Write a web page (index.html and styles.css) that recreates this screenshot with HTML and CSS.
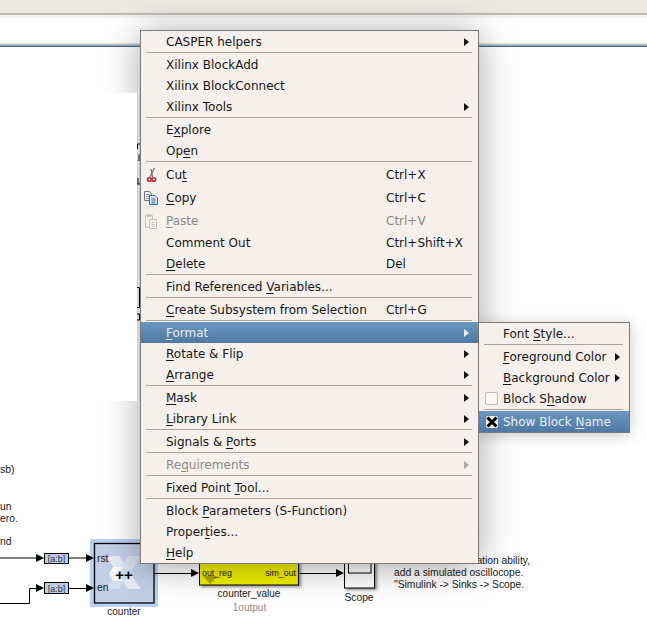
FILE: index.html
```html
<!DOCTYPE html>
<html lang="en">
<head>
<meta charset="utf-8">
<title>Simulink context menu</title>
<link rel="stylesheet" href="styles.css">
</head>
<body>
<div class="page">
  <header class="toolbar"></header>
  <div class="toolbar-rule"></div>
  <div class="strip"></div>
  <div class="status-rule"></div>

  <svg class="diagram" width="647" height="627" viewBox="0 0 647 627">
    <g class="frag">
      <path d="M137.5 149V144H140M138.5 155H140M139 156V161M138 178V184M137 184H140"/>
      <path d="M135 287.5H139.5V307.5H135"/>
      <path d="M137 314H139.5V320H137"/>
    </g>
    <text class="t" x="0" y="473">sb)</text>
    <text class="t" x="0" y="510">un</text>
    <text class="t" x="0" y="522">ero.</text>
    <text class="t" x="0" y="545">nd</text>

    <rect class="halo" x="90" y="539" width="68" height="68"/>
    <rect class="counter" x="94.5" y="543.5" width="59.5" height="59.5"/>
    <polygon class="lx1" points="106,556 119,556 129,572 141,589 128,589 118,574"/>
    <polygon class="lx2" points="141,556 128,556 118,570 106,589 119,589 130,573"/>
    <polygon class="lx3" points="113,567 123,567 119,574 123,581 113,581 109,574"/>
    <text class="plus" x="124" y="580" text-anchor="middle">++</text>
    <text class="t" x="97" y="561.500">rst</text>
    <text class="t" x="97" y="591">en</text>

    <path class="wire" d="M0 558H38M68 558H88M0 603.500H29.500V588.500H38M68 588.500H88M154 573.500H193M300 573.500H338"/>
    <polygon class="head" points="36,554 44,558 36,562"/>
    <polygon class="head" points="86,554 94,558 86,562"/>
    <polygon class="head" points="36,584 44,588 36,592"/>
    <polygon class="head" points="86,584 94,588 86,592"/>
    <polygon class="head" points="191,569 199,573 191,577"/>
    <polygon class="head" points="336,569 344,573 336,577"/>

    <rect class="slice" x="44.500" y="553.500" width="24" height="10"/>
    <text class="t sm" x="56.500" y="562" text-anchor="middle">[a:b]</text>
    <rect class="slice" x="44.500" y="582.500" width="24" height="11"/>
    <text class="t sm" x="56.500" y="591.500" text-anchor="middle">[a:b]</text>

    <rect class="drop" x="201" y="530" width="100" height="57"/>
    <rect class="yellow" x="199.500" y="528" width="99" height="57"/>
    <polygon class="tri" points="203,576 218,576 210,584"/>
    <text class="t port" x="202" y="576">out_reg</text>
    <text class="t port" x="296" y="576" text-anchor="end">sim_out</text>
    <text class="t lab" x="249" y="597" text-anchor="middle">counter_value</text>
    <text class="t lab dim" x="249.500" y="611" text-anchor="middle">1output</text>
    <text class="t lab" x="124" y="615" text-anchor="middle">counter</text>

    <rect class="drop" x="346" y="530" width="31" height="60"/>
    <rect class="scope" x="344.500" y="528" width="30" height="60"/>
    <rect class="scope-in" x="348.500" y="528" width="22.500" height="45"/>
    <text class="t" x="359" y="601" text-anchor="middle">Scope</text>

    <text class="t" x="530" y="564" text-anchor="end">ation ability,</text>
    <text class="t" x="394" y="576">add a simulated oscillocope.</text>
    <text class="t" x="394" y="588">"Simulink -&gt; Sinks -&gt; Scope.</text>
  </svg>

  <div class="menu-shadow"></div>
  <div class="sub-shadow"></div>
  <div class="white-panel"></div>

  <nav class="menu main-menu">
    <div class="item"><span class="slot"></span><span class="label">CASPER helpers</span><i class="arrow"></i></div>
    <div class="sep"></div>
    <div class="item"><span class="slot"></span><span class="label">Xilinx BlockAdd</span></div>
    <div class="item"><span class="slot"></span><span class="label">Xilinx BlockConnect</span></div>
    <div class="item"><span class="slot"></span><span class="label">Xilinx Tools</span><i class="arrow"></i></div>
    <div class="sep"></div>
    <div class="item"><span class="slot"></span><span class="label">E<u>x</u>plore</span></div>
    <div class="item"><span class="slot"></span><span class="label">Op<u>e</u>n</span></div>
    <div class="sep"></div>
    <div class="item tall"><span class="slot">
      <svg width="16" height="16" viewBox="0 0 16 16"><path class="blade" d="M10.500 1L6 10M7 2L8.500 10"/><circle class="ring" cx="5.300" cy="12.500" r="1.800"/><circle class="ring" cx="9.800" cy="12.500" r="1.800"/></svg>
    </span><span class="label">Cu<u>t</u></span><span class="keys">Ctrl+X</span></div>
    <div class="item tall"><span class="slot">
      <svg width="16" height="16" viewBox="0 0 16 16"><path class="pg" d="M0.500 1.500H5.500L7.500 3.500V10.500H0.500Z"/><path class="pl" d="M2 4.500H6M2 6.500H6M2 8.500H5"/><path class="pg2" d="M5.500 5.500H11L13.500 8V14.500H5.500Z"/><path class="pl2" d="M7.500 9H11.500M7.500 11H11.500M7.500 13H11.500"/></svg>
    </span><span class="label"><u>C</u>opy</span><span class="keys">Ctrl+C</span></div>
    <div class="item tall off"><span class="slot">
      <svg width="16" height="16" viewBox="0 0 16 16"><path class="cb" d="M1.500 2.500H8.500V14.500H1.500Z"/><path class="cb" d="M3.500 1.500H6.500V3.500H3.500Z"/><path class="cb2" d="M5.500 6.500H12.500V15.500H5.500Z"/><path class="cb" d="M7.500 9.500H10.500M7.500 11.500H10.500M7.500 13.500H10.500"/></svg>
    </span><span class="label"><u>P</u>aste</span><span class="keys">Ctrl+V</span></div>
    <div class="item"><span class="slot"></span><span class="label">Comment Out</span><span class="keys">Ctrl+Shift+X</span></div>
    <div class="item"><span class="slot"></span><span class="label"><u>D</u>elete</span><span class="keys">Del</span></div>
    <div class="sep"></div>
    <div class="item"><span class="slot"></span><span class="label">Find Referenced <u>V</u>ariables...</span></div>
    <div class="sep"></div>
    <div class="item"><span class="slot"></span><span class="label"><u>C</u>reate Subsystem from Selection</span><span class="keys">Ctrl+G</span></div>
    <div class="sep"></div>
    <div class="item active"><span class="slot"></span><span class="label"><u>F</u>ormat</span><i class="arrow"></i></div>
    <div class="item"><span class="slot"></span><span class="label"><u>R</u>otate &amp; Flip</span><i class="arrow"></i></div>
    <div class="item"><span class="slot"></span><span class="label"><u>A</u>rrange</span><i class="arrow"></i></div>
    <div class="sep"></div>
    <div class="item"><span class="slot"></span><span class="label"><u>M</u>ask</span><i class="arrow"></i></div>
    <div class="item"><span class="slot"></span><span class="label"><u>L</u>ibrary Link</span><i class="arrow"></i></div>
    <div class="sep"></div>
    <div class="item"><span class="slot"></span><span class="label">Signals &amp; <u>P</u>orts</span><i class="arrow"></i></div>
    <div class="sep"></div>
    <div class="item off"><span class="slot"></span><span class="label">Re<u>q</u>uirements</span><i class="arrow"></i></div>
    <div class="sep"></div>
    <div class="item"><span class="slot"></span><span class="label">Fixed Point <u>T</u>ool...</span></div>
    <div class="sep"></div>
    <div class="item"><span class="slot"></span><span class="label">Block <u>P</u>arameters (S-Function)</span></div>
    <div class="item"><span class="slot"></span><span class="label">Proper<u>t</u>ies...</span></div>
    <div class="item"><span class="slot"></span><span class="label"><u>H</u>elp</span></div>
  </nav>

  <nav class="menu sub-menu">
    <div class="item"><span class="slot"></span><span class="label">Font <u>S</u>tyle...</span></div>
    <div class="sep"></div>
    <div class="item"><span class="slot"></span><span class="label"><u>F</u>oreground Color</span><i class="arrow"></i></div>
    <div class="item"><span class="slot"></span><span class="label"><u>B</u>ackground Color</span><i class="arrow"></i></div>
    <div class="item"><span class="slot"><span class="check"></span></span><span class="label">Block S<u>h</u>adow</span></div>
    <div class="sep"></div>
    <div class="item active"><span class="slot"><span class="checked">
      <svg width="12" height="12" viewBox="0 0 12 12"><path class="x" d="M2.500 2.500L9.500 9.500M9.500 2.500L2.500 9.500"/></svg>
    </span></span><span class="label">Show Block <u>N</u>ame</span></div>
  </nav>
</div>
</body>
</html>
```
FILE: styles.css
```css
html, body {
  margin: 0;
  padding: 0;
  background: #fff;
}

.page {
  position: relative;
  width: 647px;
  height: 627px;
  overflow: hidden;
  background: #fff;
  display: flex;
  flex-direction: column;
}

.toolbar {
  height: 13px;
  background: #ece9e4;
}

.toolbar-rule {
  height: 5px;
  background: linear-gradient(#b8b4ad 0, #b8b4ad 1px, #c9c5bf 1px, #c9c5bf 2px, #f1efec 2px);
}

.strip {
  height: 25px;
  background: #fff;
}

.status-rule {
  height: 4px;
  background: linear-gradient(#e6e0da 0, #e6e0da 1px, #c2c4c6 1px, #c2c4c6 2px, #94a9bd 2px, #94a9bd 3px, #3f6a92 3px);
}

.diagram {
  position: absolute;
  left: 0;
  top: 0;
}

.t {
  font-family: "Liberation Sans", Arial, sans-serif;
  font-size: 10.3px;
  fill: #1a1a1a;
}

.t.sm { font-size: 9px; fill: #333; }
.t.port { font-size: 8.800px; }
.t.lab { font-size: 10px; }
.t.dim { fill: #8c8c8c; }

.plus {
  font-family: "Liberation Sans", Arial, sans-serif;
  font-size: 15px;
  font-weight: 700;
  fill: #000;
}

.frag, .wire {
  fill: none;
  stroke: #000;
  stroke-width: 1;
}

.head { fill: #000; }

.halo { fill: #b9d0f0; }
.counter { fill: #c1cee5; stroke: #000; stroke-width: 1.300; }
.lx1 { fill: #e6ebf5; }
.lx2 { fill: #d6dfef; }
.lx3 { fill: #f6f8fb; }
.slice { fill: #bacde8; stroke: #000; stroke-width: 1; }
.drop { fill: #000; opacity: .45; filter: blur(1.500px); }
.yellow { fill: #f2f200; stroke: #000; stroke-width: 1; }
.tri { fill: #b4ad00; }
.scope { fill: #fff; stroke: #000; stroke-width: 1; }
.scope-in { fill: #fff; stroke: #000; stroke-width: 1; }

.menu-shadow {
  position: absolute;
  left: 140px;
  top: 30px;
  width: 339px;
  height: 534px;
  box-shadow: 0 3px 34px rgba(0, 0, 0, .36);
}

.sub-shadow {
  position: absolute;
  left: 478px;
  top: 322px;
  width: 152px;
  height: 111px;
  box-shadow: 0 2px 14px rgba(0, 0, 0, .22);
}

.white-panel {
  position: absolute;
  left: 0;
  top: 93px;
  width: 137px;
  height: 308px;
  background: #fff;
}

.menu {
  position: absolute;
  display: flex;
  flex-direction: column;
  box-sizing: border-box;
  border: 1px solid #7d7873;
  background: #f5f0ec;
  font-family: "DejaVu Sans", sans-serif;
  font-size: 12px;
  color: #161616;
}

.main-menu {
  left: 140px;
  top: 30px;
  width: 339px;
  height: 534px;
}

.sub-menu {
  left: 478px;
  top: 322px;
  width: 152px;
  height: 111px;
}

.item {
  display: flex;
  align-items: center;
  height: 21px;
  flex: none;
  white-space: nowrap;
}

.tall { height: 23px; }

.slot {
  width: 25px;
  flex: none;
  display: flex;
  align-items: center;
  justify-content: center;
  padding-right: 4px;
  box-sizing: border-box;
}

.sub-menu .slot {
  width: 24px;
  padding-right: 0;
  padding-left: 1px;
}

.label {
  flex: none;
  width: 220px;
}

.sub-menu .label { width: auto; }

.keys { flex: none; }

u {
  text-decoration: underline;
  text-decoration-thickness: 1px;
  text-underline-offset: 2px;
}

.arrow {
  margin-left: auto;
  margin-right: 9px;
  width: 0;
  height: 0;
  border-left: 5px solid #111;
  border-top: 4px solid transparent;
  border-bottom: 4px solid transparent;
}

.sep {
  flex: none;
  height: 2px;
  margin: 0 6px 0 5px;
  background: linear-gradient(#a9a4a0 0, #a9a4a0 1px, #f5f0ec 1px);
}

.active {
  background: linear-gradient(#6b97bf, #4f79a2);
  color: #e6edf4;
}

.active .arrow { border-left-color: #e6edf4; }

.off { color: #8b8985; }
.off .arrow { border-left-color: #a9a6a2; }

.check {
  width: 11px;
  height: 11px;
  border: 1px solid #bcb8b3;
  border-radius: 2px;
  background: #f8f5f2;
}

.checked {
  width: 12px;
  height: 12px;
  background: #f2f0ee;
  border-radius: 2px;
  display: flex;
}

.x { fill: none; stroke: #000; stroke-width: 3; stroke-linecap: square; }

.blade { fill: none; stroke: #6f6f6f; stroke-width: 1.200; }
.ring { fill: none; stroke: #c0242c; stroke-width: 1.500; }
.pg { fill: #f2f2f0; stroke: #6d7480; stroke-width: 1; }
.pl { fill: none; stroke: #9aa0a8; stroke-width: 1; }
.pg2 { fill: #dbe6f2; stroke: #3a6a9e; stroke-width: 1; }
.pl2 { fill: none; stroke: #3f78b0; stroke-width: 1; }
.cb { fill: none; stroke: #c6c3bf; stroke-width: 1; }
.cb2 { fill: #f5f0ec; stroke: #c6c3bf; stroke-width: 1; }
```
